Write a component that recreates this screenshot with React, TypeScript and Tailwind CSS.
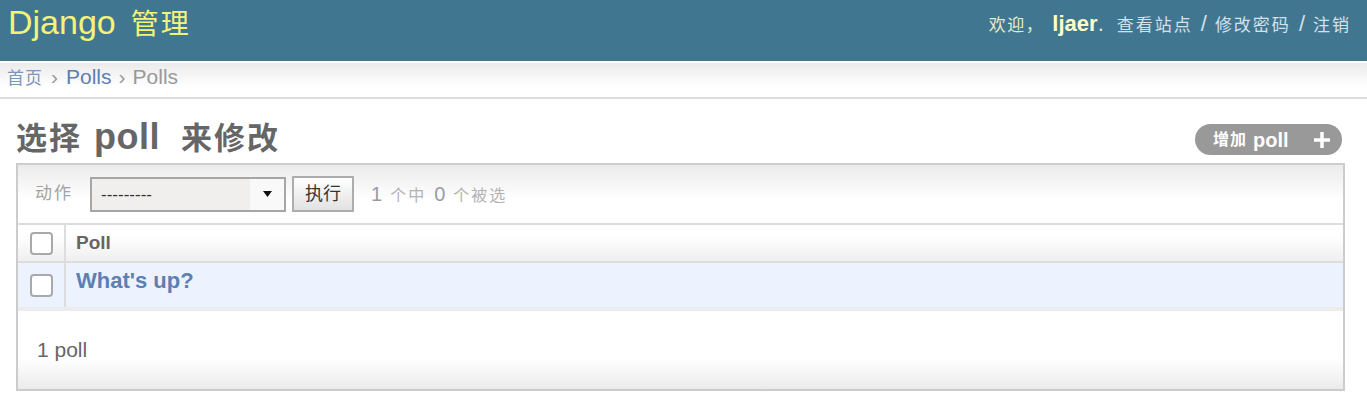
import React from 'react';

function Checkbox() {
  return <span className="block h-[23px] w-[23px] rounded-[4px] border-2 border-[#a9a9a9] bg-white" />;
}

export default function App() {
  return (
    <div className="min-h-[419px] bg-white font-['Liberation_Sans','Noto_Sans_CJK_SC',sans-serif]">
      {/* header */}
      <div className="flex h-[61px] items-start justify-between bg-[#417690]">
        <h1 className="whitespace-nowrap pl-[8px] pt-[2px] text-[34px] leading-[40px] text-[#f4f379]">
          Django<span className="ml-[15px] text-[28px] tracking-[2px]">管理</span>
        </h1>
        <div className="whitespace-nowrap pr-[16px] pt-[13px] text-[22px] leading-[22px] text-[#e6eac6]">
          <span className="text-[17px] tracking-[1.5px]">欢迎，</span>
          <strong className="ml-[8px] font-bold text-[#ffffcc]">ljaer</strong>
          <span>.</span>
          <a className="ml-[13px] text-[17px] tracking-[2px] text-[#d3e1e9]">查看站点</a>
          <span className="mx-[8px] text-[#d3e1e9]">/</span>
          <a className="text-[17px] tracking-[2px] text-[#d3e1e9]">修改密码</a>
          <span className="mx-[8px] text-[#d3e1e9]">/</span>
          <a className="text-[17px] tracking-[2px] text-[#d3e1e9]">注销</a>
        </div>
      </div>

      {/* breadcrumbs */}
      <div className="h-[38px] border-t-2 border-b-2 border-t-white border-b-[#dcdcdc] bg-linear-to-b from-[#ebebeb] to-white to-70% pl-[7px] text-[21px] leading-[28px] text-[#999]">
        <a className="text-[17px] tracking-[1px] text-[#7d95b8]">首页</a>
        <span className="px-[8px]">›</span>
        <a className="text-[#5b80b2]">Polls</a>
        <span className="px-[7px]">›</span>
        <span>Polls</span>
      </div>

      {/* content */}
      <div className="ml-4 mr-[22px]">
        <div className="mt-[16px] mb-[4px] flex items-start justify-between">
          <h1 className="h-[44px] whitespace-nowrap text-[36px] font-bold leading-[44px] text-[#666]">
            <span className="text-[31px] tracking-[2px]">选择</span>
            <span className="ml-[12px] mr-[21px] tracking-[0.5px]">poll</span>
            <span className="text-[31px] tracking-[2px]">来修改</span>
          </h1>
          <a className="mt-[9px] mr-[3px] flex h-[31px] w-[147px] items-center rounded-full bg-[#999] pl-[18px] text-[20px] font-bold text-white">
            <span className="text-[16px] tracking-[1px]">增加</span>
            <span className="ml-[6px]">poll</span>
            <svg className="ml-auto mr-[10px]" width="20" height="20" viewBox="0 0 20 20">
              <path d="M10 2v16M2 10h16" stroke="white" strokeWidth="3.5" />
            </svg>
          </a>
        </div>

        <div className="border-2 border-[#ccc]">
          {/* actions */}
          <div className="flex h-[60px] items-center border-b-2 border-[#ddd] bg-linear-to-b from-[#ebebeb] to-white to-60% pl-[17px]">
            <span className="text-[17px] tracking-[2px] text-[#a3a3a3]">动作</span>
            <div className="ml-[17px] flex h-[35px] w-[196px] border-2 border-[#a6a6a6] bg-[#f0efed]">
              <span className="flex-1 pl-[9px] text-[17px] leading-[31px] text-[#333]">---------</span>
              <span className="flex w-[34px] items-center justify-center bg-[#f9f9f9]">
                <svg width="9" height="6" viewBox="0 0 9 6">
                  <path d="M0 0h9L4.5 6z" fill="#111" />
                </svg>
              </span>
            </div>
            <button className="ml-[6px] h-[36px] w-[62px] border-2 border-[#adadad] bg-linear-to-b from-white to-[#e2e2e2] text-[18px] text-[#333]">
              执行
            </button>
            <span className="ml-[17px] whitespace-nowrap text-[20px] text-[#9a9aa6]">
              1<span className="mx-[8px] text-[16px] tracking-[2px] text-[#b3b3b3]">个中</span>0
              <span className="ml-[8px] text-[16px] tracking-[2px] text-[#b3b3b3]">个被选</span>
            </span>
          </div>

          {/* table header */}
          <div className="flex h-[38px] border-b-2 border-[#ddd] bg-linear-to-b from-white from-30% to-[#efefef]">
            <div className="flex w-[46px] items-center justify-center">
              <Checkbox />
            </div>
            <div className="flex flex-1 items-center border-l-2 border-[#ddd] pl-[10px] text-[19px] font-bold text-[#666]">
              Poll
            </div>
          </div>

          {/* row */}
          <div className="flex h-[48px] border-b-4 border-[#ececec] bg-[#edf3fe]">
            <div className="flex w-[46px] items-center justify-center">
              <Checkbox />
            </div>
            <div className="flex-1 border-l-2 border-[#ddd] pl-[10px] pt-[7px] text-[22px] font-bold leading-[22px] text-[#5b80b2]">
              What's up?
            </div>
          </div>

          {/* paginator */}
          <div className="h-[78px] bg-linear-to-b from-white from-60% to-[#ebebeb] pl-[19px] pt-[27px] text-[21px] leading-[24px] text-[#666]">
            1 poll
          </div>
        </div>
      </div>
    </div>
  );
}
